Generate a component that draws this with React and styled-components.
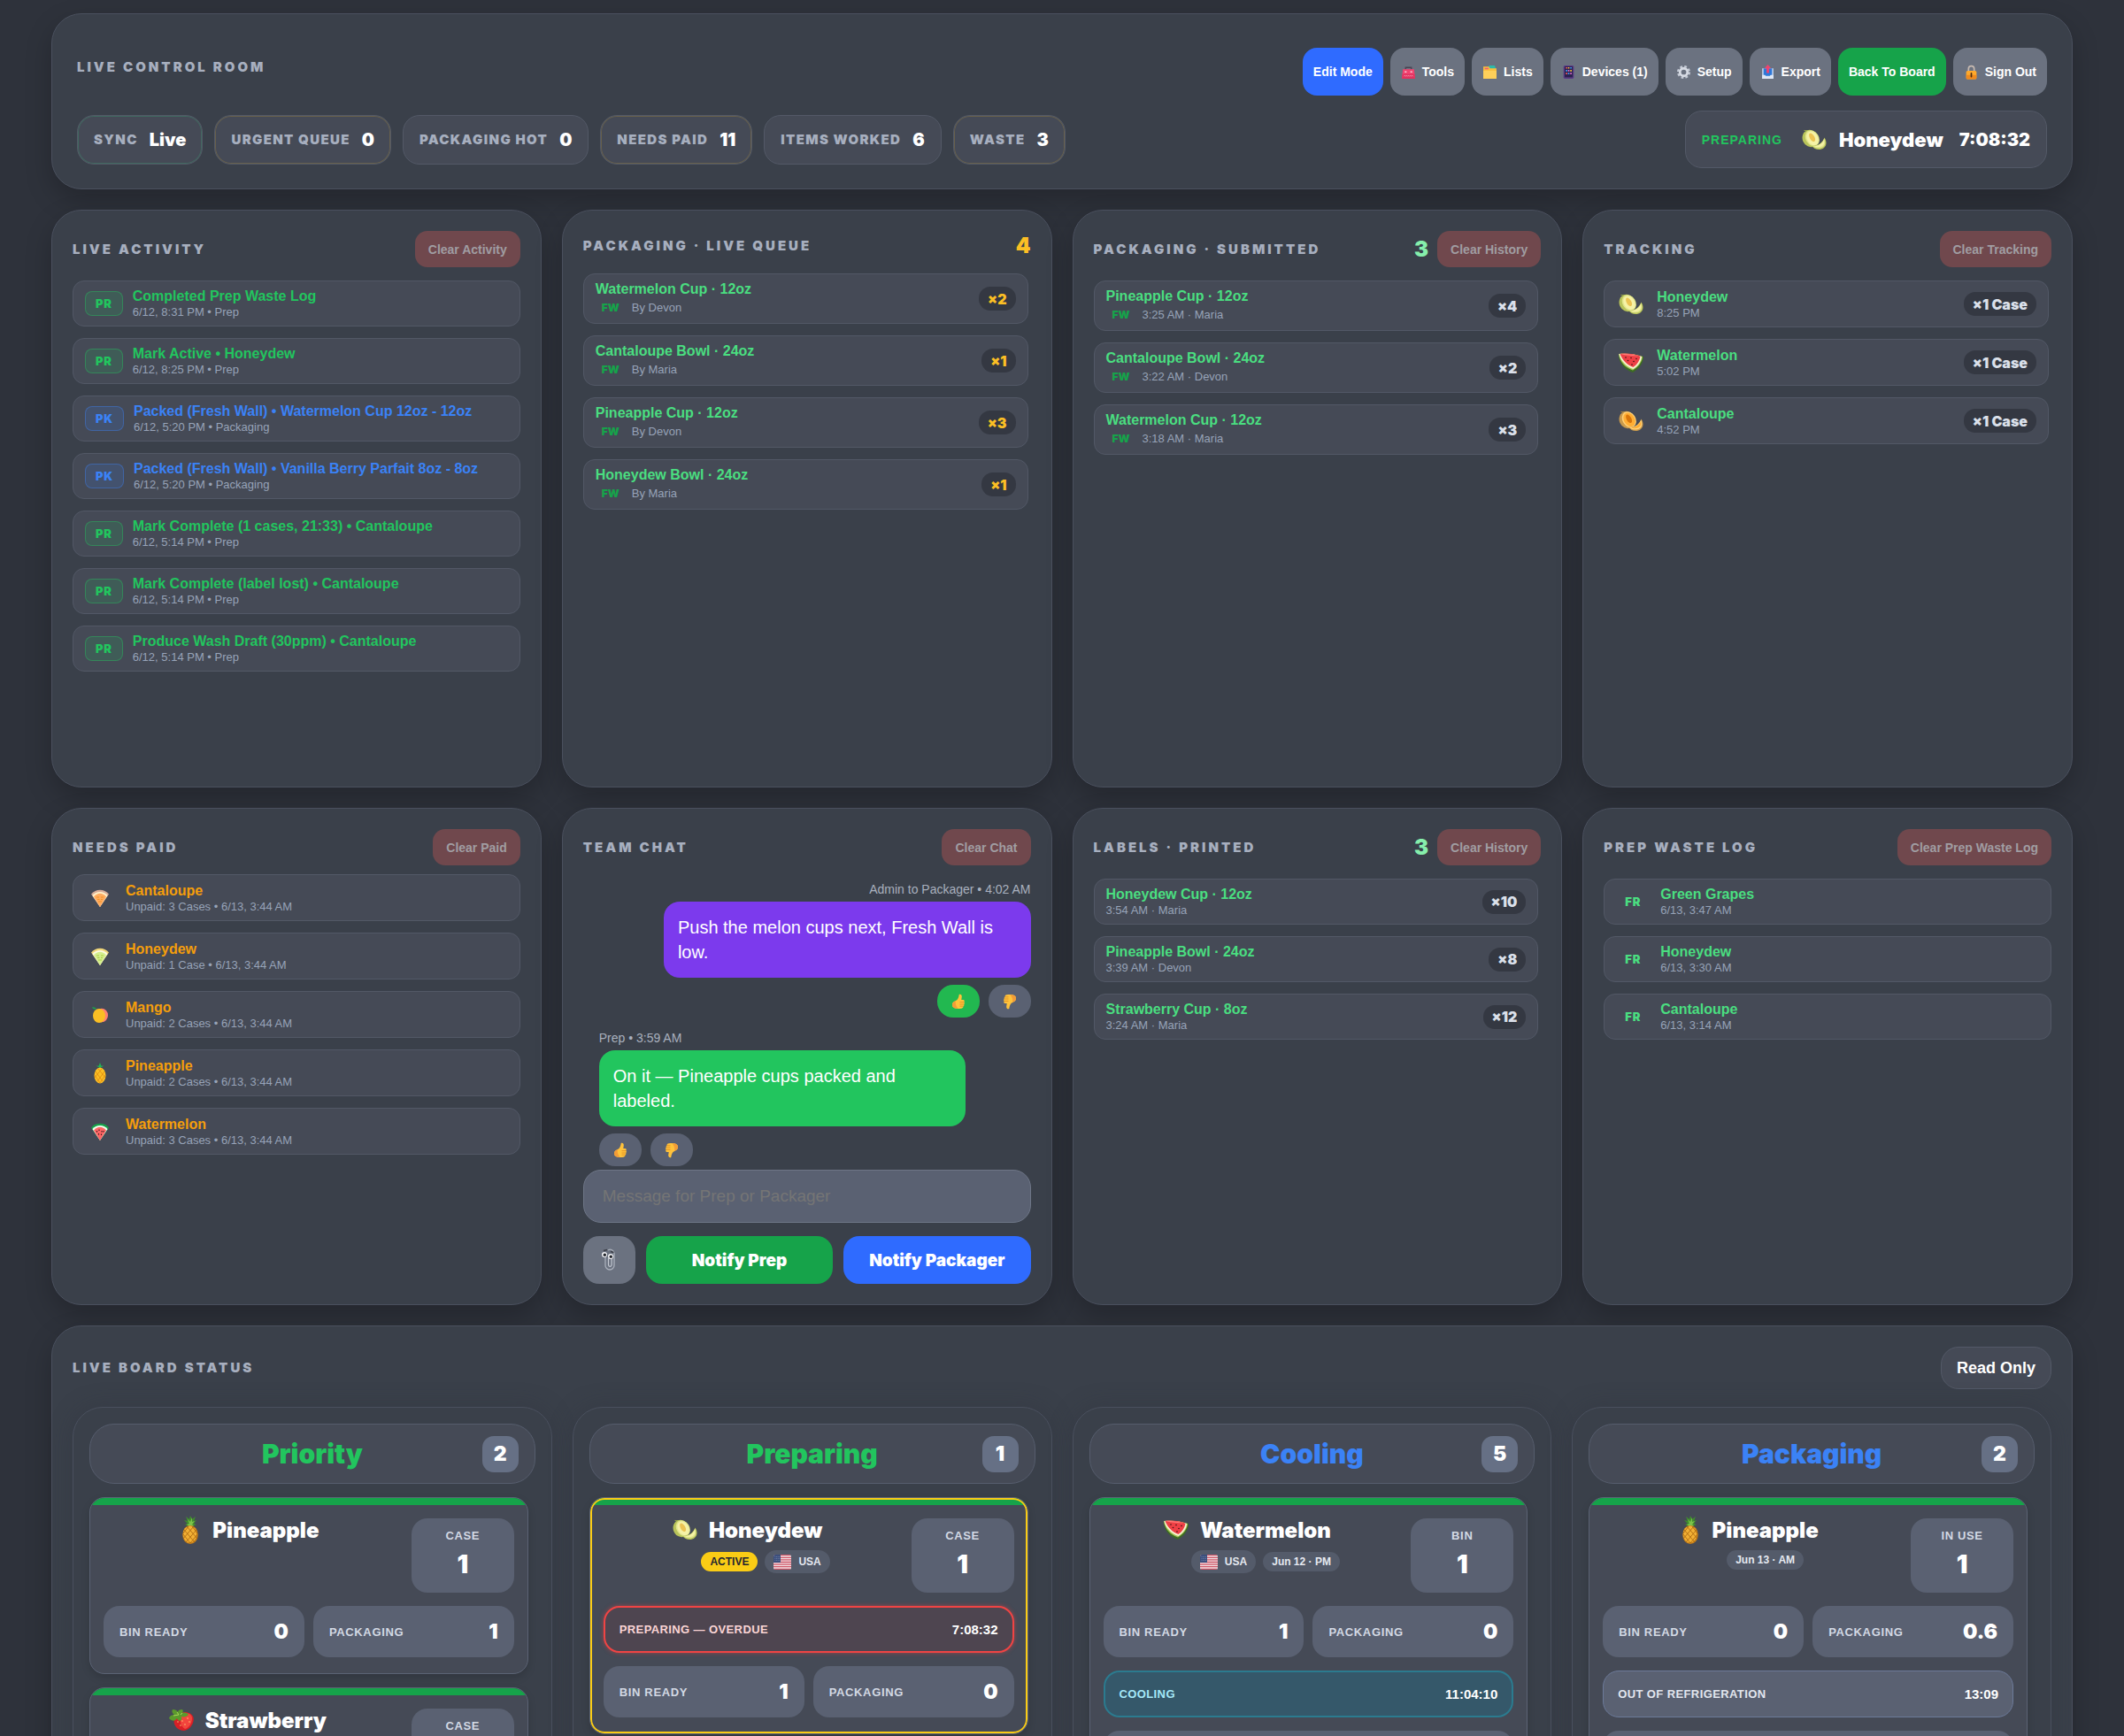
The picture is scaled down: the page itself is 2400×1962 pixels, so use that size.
import React from 'react'
import styled, { createGlobalStyle } from 'styled-components'

const black = `font-family: 'Arial Black', Inter, 'Liberation Sans', sans-serif; font-weight: 900;`

const GlobalStyle = createGlobalStyle`
*{
    box-sizing: border-box;
}
body{
    margin: 0;
    background: #2e323b;
    color: #fff;
    font-family: 'Liberation Sans', Arial, sans-serif;
}
h1, h2, h3, h4, p, ul{
    margin: 0;
    padding: 0;
}
ul{
    list-style: none;
}
button, input{
    font-family: inherit;
    border: 0;
    margin: 0;
}
svg{
    display: block;
    flex: none;
}
`

/* ---------- layout ---------- */

const Page = styled.main`
display: flex;
flex-direction: column;
gap: 23px;
height: 100vh;
overflow: hidden;
padding: 15px 58px 0;
`

const Panel = styled.section`
display: flex;
flex-direction: column;
flex: none;
min-width: 0;
padding: 23px;
border: 1px solid #4a505e;
border-radius: 34px;
background: #3a404a;
box-shadow: 0 12px 30px rgba(0, 0, 0, 0.22);
`

const PanelRow = styled.div`
display: grid;
flex: none;
grid-template-columns: repeat(4, minmax(0, 1fr));
grid-auto-rows: minmax(${p => p.$min}px, auto);
gap: 23px;
`

const PanelHead = styled.header`
display: flex;
align-items: center;
justify-content: space-between;
min-height: 33px;
margin-bottom: ${p => p.$space || 15}px;
`

const PanelTitle = styled.h2`
${black}
font-size: 15px;
line-height: 20px;
letter-spacing: 0.2em;
text-transform: uppercase;
color: #a7afbf;
`

const HeadSide = styled.div`
display: flex;
align-items: center;
gap: 10px;
`

const HeadCount = styled.span`
${black}
font-size: 24px;
line-height: 33px;
color: ${p => p.$color};
`

const ClearButton = styled.button`
height: 41px;
padding: 0 15px;
border-radius: 14px;
background: #70484d;
color: #a09da2;
font-size: 14px;
font-weight: 700;
`

/* ---------- top bar ---------- */

const TopBar = styled(Panel)`
gap: 17px;
padding: 38px 28px 23px;
`

const BarRow = styled.div`
display: flex;
align-items: ${p => p.$top ? 'flex-start' : 'center'};
justify-content: space-between;
`

const BarTitle = styled(PanelTitle)`
line-height: 44px;
`

const Toolbar = styled.nav`
display: flex;
gap: 8px;
`

const ToolButton = styled.button`
display: flex;
align-items: center;
gap: 7px;
height: 54px;
padding: 0 12px;
border-radius: 16px;
background: ${p => p.$bg || '#6b7280'};
color: #fff;
font-size: 14px;
font-weight: 700;
`

const Chips = styled.ul`
display: flex;
gap: 13px;
`

const Chip = styled.li`
display: flex;
align-items: center;
gap: 13px;
height: 56px;
padding: 0 18px;
border: 1px solid #535967;
border-radius: 19px;
background: #454a56;
box-shadow: inset 0 0 0 1px ${p => p.$ring || 'transparent'};
span{
    ${black}
    font-size: 15px;
    letter-spacing: 0.09em;
    color: #a7afbf;
}
strong{
    ${black}
    font-size: 20px;
}
`

const Running = styled.div`
display: flex;
align-items: center;
gap: 18px;
height: 65px;
padding: 0 18px;
border: 1px solid #535967;
border-radius: 19px;
background: #454a56;
.state{
    font-size: 14px;
    font-weight: 700;
    letter-spacing: 1px;
    color: #22c55e;
}
.name{
    ${black}
    display: flex;
    align-items: center;
    gap: 14px;
    padding-left: 4px;
    font-size: 22px;
}
.time{
    ${black}
    font-size: 20px;
}
`

/* ---------- list rows ---------- */

const List = styled.ul`
display: flex;
flex-direction: column;
gap: 13px;
padding-right: ${p => p.$inset ? 3 : 0}px;
`

const Row = styled.li`
display: flex;
align-items: center;
gap: ${p => p.$gap || 11}px;
min-height: ${p => p.$tall ? 53 : 52}px;
padding: 7px 13px;
border: 1px solid #525866;
border-radius: 13px;
background: #454a56;
`

const RowText = styled.div`
flex: 1;
min-width: 0;
h3{
    font-size: 16px;
    line-height: 20px;
    font-weight: 700;
    color: ${p => p.$color || '#4ade80'};
}
p{
    display: flex;
    align-items: center;
    gap: 7px;
    font-size: 13px;
    line-height: ${p => p.$tagged ? 21 : 16}px;
    color: #97a3b8;
}
`

const Code = styled.span`
${black}
display: grid;
place-items: center;
height: 28px;
padding: 0 11px;
border: 1px solid ${p => p.$color}66;
border-radius: 8px;
background: ${p => p.$color}26;
color: ${p => p.$color};
font-size: 13px;
letter-spacing: 0.06em;
`

const PlainCode = styled.span`
${black}
width: 38px;
text-align: center;
font-size: 13px;
letter-spacing: 0.06em;
color: #4ade80;
`

const Place = styled.span`
${black}
padding: 0 7px;
font-size: 12px;
color: #16a34a;
`

const Pill = styled.span`
${black}
display: grid;
place-items: center;
height: 27px;
padding: 0 10px;
border-radius: 13px;
background: #343842;
color: ${p => p.$color || '#dbe0ea'};
font-size: 16px;
`

const IconBox = styled.span`
display: grid;
place-items: center;
width: ${p => p.$w}px;
`

/* ---------- chat ---------- */

const Messages = styled.div`
display: flex;
flex: 1;
flex-direction: column;
gap: 15px;
padding-top: 4px;
`

const Message = styled.article`
display: flex;
flex-direction: column;
align-items: ${p => p.$mine ? 'flex-end' : 'flex-start'};
padding-left: 18px;
.meta{
    font-size: 14px;
    line-height: 16px;
    color: #a9b0be;
}
.bubble{
    width: 85%;
    margin: 6px 0 8px;
    padding: 15px 16px;
    border-radius: 18px;
    background: ${p => p.$bg};
    font-size: 20px;
    line-height: 28px;
}
`

const Reactions = styled.div`
display: flex;
gap: 10px;
`

const Reaction = styled.button`
display: grid;
place-items: center;
width: 48px;
height: 37px;
border-radius: 18px;
background: ${p => p.$on ? '#22b850' : '#5a6172'};
`

const MessageInput = styled.input`
width: 100%;
height: 60px;
margin-bottom: 15px;
padding: 0 21px;
border: 1px solid #6e7687;
border-radius: 20px;
background: #5a6172;
color: #fff;
font-size: 19px;
&::placeholder{
    color: #757575;
}
`

const SendRow = styled.div`
display: grid;
grid-template-columns: 59px 1fr 1fr;
gap: 12px;
`

const SendButton = styled.button`
${black}
display: grid;
place-items: center;
height: 54px;
border-radius: 18px;
background: ${p => p.$bg};
color: #fff;
font-size: 19px;
`

/* ---------- board ---------- */

const ReadOnly = styled.span`
display: grid;
place-items: center;
height: 48px;
padding: 0 17px;
border: 1px solid #535967;
border-radius: 20px;
background: #454a56;
font-size: 18px;
font-weight: 700;
`

const Column = styled.div`
display: flex;
flex-direction: column;
gap: 15px;
padding: 18px;
border: 1px solid #4a505e;
border-radius: 34px;
background: #3a404a;
box-shadow: 0 0 26px rgba(46, 48, 60, 0.35);
`

const ColumnHead = styled.header`
display: grid;
grid-template-columns: 1fr auto 1fr;
align-items: center;
height: 68px;
padding: 0 18px;
border: 1px solid #565d6d;
border-radius: 28px;
background: #454a56;
h3{
    ${black}
    grid-column: 2;
    font-size: 30px;
    color: ${p => p.$color};
}
span{
    ${black}
    justify-self: end;
    display: grid;
    place-items: center;
    width: 41px;
    height: 41px;
    border-radius: 13px;
    background: #667085;
    font-size: 23px;
}
`

const Cards = styled.div`
display: flex;
flex-direction: column;
gap: 15px;
padding-right: 8px;
`

const Card = styled.article`
position: relative;
display: flex;
flex-direction: column;
gap: 15px;
padding: 15px 15px 18px;
border: 1px solid #5b6374;
border-radius: 17px;
background: #454a56;
box-shadow: 0 4px 10px rgba(0, 0, 0, 0.15);
overflow: hidden;
&::before{
    content: '';
    height: 8px;
    margin: -15px -15px 0;
    background: #16a34a;
}
&::after{
    content: '';
    position: absolute;
    inset: 0;
    border: ${p => p.$active ? '2px solid #facc15' : '0'};
    border-radius: 16px;
    pointer-events: none;
}
`

const CardTop = styled.div`
display: grid;
grid-template-columns: minmax(0, 1fr) 116px;
gap: 22px;
`

const CardName = styled.div`
h4{
    ${black}
    display: flex;
    align-items: center;
    justify-content: center;
    gap: 13px;
    height: 26px;
    font-size: 24px;
}
div{
    display: flex;
    align-items: center;
    justify-content: center;
    gap: 8px;
    margin-top: 10px;
    padding-left: 41px;
}
`

const Tag = styled.span`
display: flex;
align-items: center;
gap: 8px;
height: ${p => p.$flag ? 26 : 22}px;
padding: 0 10px;
border-radius: 13px;
background: ${p => p.$active ? '#facc15' : '#545b6a'};
color: ${p => p.$active ? '#1f2430' : '#e5e9f0'};
font-size: 12px;
font-weight: 700;
`

const BigStat = styled.div`
display: flex;
flex-direction: column;
align-items: center;
height: 84px;
padding-top: 12px;
border-radius: 18px;
background: #5a6172;
span{
    font-size: 13px;
    line-height: 16px;
    font-weight: 700;
    letter-spacing: 0.05em;
    color: #d3d9e4;
}
strong{
    ${black}
    font-size: 28px;
    line-height: 48px;
}
`

const Stats = styled.div`
display: grid;
grid-template-columns: 1fr 1fr;
gap: 10px;
`

const Stat = styled.div`
display: flex;
align-items: center;
justify-content: space-between;
height: 58px;
padding: 0 18px;
border-radius: 18px;
background: #5a6172;
span{
    font-size: 13px;
    font-weight: 700;
    letter-spacing: 0.05em;
    color: #d3d9e4;
}
strong{
    ${black}
    font-size: 23px;
}
`

const timerTones = {
    overdue: { bg: '#4e4550', line: '#ef4444', text: '#fbd5d5', size: 2, glow: '0 0 5px rgba(239, 68, 68, 0.5)' },
    cooling: { bg: '#35586a', line: '#2b7b8f', text: '#a5e8f8', size: 2, glow: 'none' },
    warm: { bg: '#5a6172', line: '#6c7a99', text: '#e2e6ee', size: 1, glow: 'none' },
}

const Timer = styled.div`
display: flex;
align-items: center;
justify-content: space-between;
height: 53px;
padding: 0 16px;
border: ${p => timerTones[p.$tone].size}px solid ${p => timerTones[p.$tone].line};
border-radius: 18px;
background: ${p => timerTones[p.$tone].bg};
box-shadow: ${p => timerTones[p.$tone].glow};
span{
    font-size: 13px;
    font-weight: 700;
    letter-spacing: 0.03em;
    color: ${p => timerTones[p.$tone].text};
}
strong{
    font-size: 15px;
}
`

const CardFoot = styled.div`
height: 58px;
border-radius: 18px;
background: #5a6172;
`

/* ---------- icons ---------- */

const Melon = ({ rind, flesh, core, light, stem }) => (
    <svg width="28" height="24" viewBox="0 0 28 24" aria-hidden="true">
        <path d="M3 1.5c2 .8 4-.6 6 .5" stroke={stem} strokeWidth="1.3" fill="none" strokeLinecap="round" />
        <ellipse cx="9.5" cy="10.5" rx="8.8" ry="9.8" transform="rotate(-24 9.5 10.5)" fill={rind} />
        <ellipse cx="11.8" cy="10.2" rx="7.4" ry="9.6" transform="rotate(-32 11.8 10.2)" fill={light} />
        <ellipse cx="12" cy="10.2" rx="6" ry="8.3" transform="rotate(-32 12 10.2)" fill={flesh} />
        <ellipse cx="11.6" cy="9.3" rx="2.7" ry="5.2" transform="rotate(-30 11.6 9.3)" fill={core} />
        <path d="M25.5 9.5C28 13 28.5 18 25 21c-4 3.500-11 2.500-14-2.500C17 19.500 23 16.500 25.500 9.500z" fill={rind} />
        <path d="M25.2 10.5C27 14 26.8 18 24 20c-3.500 2.500-9 2-12-1C17.500 19.500 23 16.500 25.200 10.500z" fill={light} />
        <path d="M24.8 12.5c1 3 .2 5.200-2 6.500-2.500 1.500-6 1.500-8.500.2 4.500-.2 8.500-2.700 10.500-6.700z" fill={flesh} />
    </svg>
)

const Honeydew = () => <Melon rind="#b9c45a" flesh="#f6f2a6" core="#ecc453" light="#e1e68c" stem="#8a9a4a" />
const Cantaloupe = () => <Melon rind="#c99a4c" flesh="#ffae34" core="#d9760c" light="#ffd076" stem="#9a8046" />

const Watermelon = () => (
    <svg width="28" height="22" viewBox="0 0 28 22" aria-hidden="true">
        <path d="M0 1C9 0 19 1 28 4c0 7-4 13-12 18C7 19 0 12 0 1z" fill="#3d6b24" />
        <path d="M0 1c9-1 19 0 27 3-.5 6-4 11-11 15.500C8 17 1 10 0 1z" fill="#a7c957" />
        <path d="M.5 1c9-1 18 0 25.500 3-.5 5.500-3.500 10-9.500 14C9 15.500 2 9 .5 1z" fill="#f6f3d4" />
        <path d="M1.500 1c8-1 16 0 23 2.800-.7 5-3.500 9-8 12.200C10 13.800 4 8 1.500 1z" fill="#ee3f45" />
        <path d="M2 1.200c7-.7 14 0 20 2.300-6-.5-13-.7-20-2.300z" fill="#ff7c78" />
        <g fill="#3a1414">
            <circle cx="8" cy="5" r=".8" /><circle cx="14" cy="5.5" r=".8" /><circle cx="10.5" cy="8.5" r=".8" />
            <circle cx="17" cy="9.5" r=".8" /><circle cx="20" cy="6.5" r=".8" /><circle cx="15" cy="13" r=".8" />
        </g>
    </svg>
)

const Pineapple = () => (
    <svg width="32" height="32" viewBox="0 0 32 32" aria-hidden="true">
        <path d="M16 13l-6-3 3-1-4-4 4 1-2-5 4 3 1-4 2 4 4-3-2 5 3-1-3 4 3 1z" fill="#3f8f2c" />
        <path d="M16 13l-4-3 3-1-2-5 3 3 2-5v5l3-1-3 4 2 1z" fill="#7cc24a" />
        <ellipse cx="16" cy="21.5" rx="8.8" ry="10.5" fill="#c98018" />
        <ellipse cx="15.5" cy="21" rx="7.6" ry="9.4" fill="#f2b034" />
        <path d="M9 16l12 14M8 21l8 10M12 12l12 14M18 12l6 8M23 16L11 30M24 21l-8 10M20 12L8 26M14 12l-6 8" stroke="#a8640f" strokeWidth="0.8" />
    </svg>
)

const Strawberry = () => (
    <svg width="28" height="24" viewBox="0 0 28 24" aria-hidden="true">
        <path d="M12 5c4-4 14-2 15.500 4C29 16 23 23 17 24 9 24 4 17 6 10c1-2 3-4 6-5z" fill="#d81f26" />
        <path d="M15 6c5-3 11-1 11 4 0 6-4 11-8 12-5-3-7-10-3-16z" fill="#f2453d" />
        <path d="M0 10c1-3 3-4 6-4C3 4 3 2 4 0c3 0 5 1 6 3 0-2 2-3 5-3 1 1 1 3 0 4 3-1 6 0 7 2-2 2-5 3-8 2 1 3 0 4-2 5-2-1-3-2-3-3-2 3-5 4-9 0z" fill="#5b9a2c" />
        <path d="M5 7l6-1M9 3l2 3M15 4l-2 2" stroke="#a9d65b" strokeWidth="1" />
        <g fill="#ffd77a">
            <circle cx="10" cy="14" r=".7" /><circle cx="15" cy="13" r=".7" /><circle cx="21" cy="10" r=".7" />
            <circle cx="13" cy="18" r=".7" /><circle cx="18" cy="17" r=".7" /><circle cx="23" cy="14" r=".7" />
        </g>
    </svg>
)

const fruits = { Honeydew, Cantaloupe, Watermelon, Pineapple, Strawberry }

const Wedge = ({ rind, pith, flesh, marks, seeds }) => (
    <svg width="20" height="20" viewBox="0 0 20 20" aria-hidden="true">
        <path d="M0 5.5C5-1 15-1 20 5.5L10 20z" fill={rind} />
        <path d="M1.4 7C6 1.5 14 1.5 18.6 7L10 20z" fill={pith} />
        <path d="M3 8.5C7 3.5 13 3.5 17 8.5L10 20z" fill={flesh} />
        {marks && <path d="M6 9h3m2 0h3M7 11.5h2.500m1.500 0h2M8 14h4" stroke={marks} strokeWidth="0.9" />}
        {seeds && <path d="M6.5 9v1.500M9 7.500v1.500M12 9v1.500M14 9v1.500M8.500 12v1.500M11.500 12.500v1.500" stroke="#3b1d1d" strokeWidth="1.1" />}
    </svg>
)

const flatFruits = {
    Cantaloupe: <Wedge rind="#d9ad98" pith="#fff0c8" flesh="#ffab5e" marks="#f0921e" />,
    Honeydew: <Wedge rind="#f1d77a" pith="#fdfbe0" flesh="#d4ee8e" marks="#a7c93a" />,
    Watermelon: <Wedge rind="#16a34a" pith="#f3fdf0" flesh="#ff6464" seeds />,
    Mango: (
        <svg width="20" height="20" viewBox="0 0 20 20" aria-hidden="true">
            <ellipse cx="12" cy="10.5" rx="7" ry="7.8" fill="#ff7f73" />
            <ellipse cx="9" cy="11" rx="7" ry="8" fill="#fbbf24" />
            <path d="M1 1.5c2-.5 4 0 5 2-2 .5-4 0-5-2z" fill="#1f9d4d" />
        </svg>
    ),
    Pineapple: (
        <svg width="20" height="24" viewBox="0 0 20 24" aria-hidden="true">
            <path d="M10 6L5.5 3.5l3 .3L10 0l1.500 3.800 3-.3z" fill="#22b455" />
            <ellipse cx="10" cy="14.5" rx="6.5" ry="9" fill="#fbbf24" />
            <path d="M5 10l8 11M8 7l8 10M15 10L7 21M12 7L4 17M4 14l6 9M16 14l-6 9" stroke="#e08a10" strokeWidth="0.8" />
        </svg>
    ),
}

const Glyph = ({ children }) => (
    <svg width="17" height="17" viewBox="0 0 16 16" aria-hidden="true">{children}</svg>
)

const glyphs = {
    tools: <Glyph>
        <path d="M5 5V3h6v2" fill="none" stroke="#4b4453" strokeWidth="1.4" />
        <path d="M2 5h12l1 10H1z" fill="#f0436f" />
        <path d="M1.5 10h13L15 15H1z" fill="#e2325f" />
        <path d="M4 7h2v1.500H4zM10 7h2v1.500h-2z" fill="#f7c9d6" />
        <path d="M3 12.5l1-1 1 1 1-1 1 1 1-1 1 1 1-1 1 1 1-1 1 1" stroke="#f7a7bd" strokeWidth=".7" fill="none" />
    </Glyph>,
    lists: <Glyph>
        <path d="M7 1h6l1 2v3H7z" fill="#2fb9a8" />
        <path d="M1 2h6l1 2h7v11H1z" fill="#fbbf3c" />
        <path d="M2.5 3.5h4v1.500h-4z" fill="#f05a78" />
        <path d="M1 6.5h14V15H1z" fill="#ffd05a" />
    </Glyph>,
    devices: <Glyph>
        <rect x="2.5" y="1" width="11" height="14" rx="1.5" fill="#5a3a86" />
        <rect x="3.7" y="2" width="8.6" height="11.5" fill="#2b2150" />
        <path d="M5 3.5h1.500M5 9.5h1.500" stroke="#ff5d5d" strokeWidth="1.5" />
        <path d="M7.3 3.5h1.500M9.7 6.5h1.500" stroke="#ffc83d" strokeWidth="1.5" />
        <path d="M9.7 3.5h1.500M5 6.5h1.500M7.3 9.5h1.500" stroke="#3ea2ff" strokeWidth="1.5" />
        <path d="M7.3 6.5h1.500M9.7 9.5h1.500" stroke="#e86fd0" strokeWidth="1.5" />
    </Glyph>,
    setup: <Glyph>
        <circle cx="8" cy="8" r="6" fill="none" stroke="#c5cbd6" strokeWidth="2.2" strokeDasharray="2.6 2.11" />
        <circle cx="8" cy="8" r="4" fill="none" stroke="#d6dae3" strokeWidth="2.6" />
    </Glyph>,
    exportBox: <Glyph>
        <path d="M2 4h12v11H2z" fill="#c3d3ee" />
        <path d="M3.5 4h9v8h-9z" fill="#2f78d8" />
        <path d="M2 11h3l1 1.500h4L11 11h3v4H2z" fill="#dfe7f5" />
        <path d="M8 0l3.500 4H9.300v5H6.700V4H4.500z" fill="#f0436f" />
    </Glyph>,
    lock: <Glyph>
        <path d="M5 7V4.5a3 3 0 016 0V7" fill="none" stroke="#c6b9b0" strokeWidth="1.6" />
        <rect x="2.5" y="6.5" width="11" height="9" rx="1.5" fill="#ffa92b" />
        <path d="M2.5 11h11v3a1.500 1.500 0 01-1.500 1.500H4A1.500 1.500 0 012.500 14z" fill="#f08a1d" />
        <path d="M8 9.3v3.500" stroke="#4a2a10" strokeWidth="1.6" strokeLinecap="round" />
    </Glyph>,
}

const Thumb = ({ down }) => (
    <svg width="16" height="18" viewBox="0 0 16 18" aria-hidden="true">
        <g transform={down ? 'rotate(180 8 9)' : undefined}>
            <path d="M6.5 7C8 5 8.500 3 8.700 1c1.600-1 3.300.2 3.100 2.500L11.300 7h2.200c1.500.2 1.700 1.900.7 2.500 1 .6.900 2-.1 2.400.7.800.3 1.900-.6 2.200.2 1.200-.5 2.400-2 2.600-4 .6-7 .3-8.500-.7C1.200 15 .8 13.500 1 12c.3-2.800 3.500-3.500 5.500-5z" fill="#ffc23b" />
            <path d="M1 12c.2-2 2-3.200 4-4-.8 2.500 0 6 2.500 8.700-2 0-3.700-.2-4.500-.7C1.200 15 .8 13.500 1 12z" fill="#f29c38" />
            <path d="M9.5 9.6h4.500M9.5 12h4.400M9.5 14.2h4" stroke="#dd8a22" strokeWidth=".8" />
        </g>
    </svg>
)

const Clip = () => (
    <svg width="18" height="28" viewBox="0 0 18 28" aria-hidden="true">
        <path d="M5 9v11a5 5 0 0010 0V6.500a4.500 4.500 0 00-7-3.500" fill="none" stroke="#aab0bb" strokeWidth="1.3" />
        <path d="M8.5 12v7.500a1.800 1.800 0 003.600 0V11" fill="none" stroke="#c5cad3" strokeWidth="1.2" />
        <circle cx="4" cy="8" r="3" fill="#f4f5f7" />
        <circle cx="11" cy="10" r="3" fill="#f4f5f7" />
        <circle cx="4.3" cy="8.3" r="1.7" fill="#23262d" />
        <circle cx="11.3" cy="10.3" r="1.7" fill="#23262d" />
        <path d="M3 3.5l4-1M11 4.5l3.500 1" stroke="#3a3d45" strokeWidth="1.4" />
    </svg>
)

const Flag = () => (
    <svg width="20" height="17" viewBox="0 0 20 17" aria-hidden="true">
        <rect width="20" height="17" rx="2.5" fill="#f1dfe3" />
        <path d="M1 .7h18M0 3.3h20M0 5.9h20M0 8.5h20M0 11.1h20M0 13.7h20M1 16.3h18" stroke="#d0596a" strokeWidth="1.3" />
        <path d="M2.5 0H8v9H0V2.500A2.500 2.500 0 012.500 0z" fill="#3c4f7d" />
        <path d="M1.5 2.5h5.500M1.5 4.5h5.500M1.5 6.5h5.500" stroke="#8493b5" strokeWidth=".7" strokeDasharray=".8 .8" />
    </svg>
)

/* ---------- data ---------- */

const tools = [
    { name: 'Edit Mode', bg: '#2f6bff' },
    { name: 'Tools', icon: 'tools' },
    { name: 'Lists', icon: 'lists' },
    { name: 'Devices (1)', icon: 'devices' },
    { name: 'Setup', icon: 'setup' },
    { name: 'Export', icon: 'exportBox' },
    { name: 'Back To Board', bg: '#16a34a' },
    { name: 'Sign Out', icon: 'lock' },
]

const chips = [
    ['Sync', 'Live', '#40685f'],
    ['Urgent Queue', '0', '#67604c'],
    ['Packaging Hot', '0'],
    ['Needs Paid', '11', '#67604c'],
    ['Items Worked', '6'],
    ['Waste', '3', '#67604c'],
]

const activity = [
    ['PR', 'Completed Prep Waste Log', '6/12, 8:31 PM • Prep'],
    ['PR', 'Mark Active • Honeydew', '6/12, 8:25 PM • Prep'],
    ['PK', 'Packed (Fresh Wall) • Watermelon Cup 12oz - 12oz', '6/12, 5:20 PM • Packaging'],
    ['PK', 'Packed (Fresh Wall) • Vanilla Berry Parfait 8oz - 8oz', '6/12, 5:20 PM • Packaging'],
    ['PR', 'Mark Complete (1 cases, 21:33) • Cantaloupe', '6/12, 5:14 PM • Prep'],
    ['PR', 'Mark Complete (label lost) • Cantaloupe', '6/12, 5:14 PM • Prep'],
    ['PR', 'Produce Wash Draft (30ppm) • Cantaloupe', '6/12, 5:14 PM • Prep'],
]

const queue = [
    ['Watermelon Cup · 12oz', 'By Devon', 2],
    ['Cantaloupe Bowl · 24oz', 'By Maria', 1],
    ['Pineapple Cup · 12oz', 'By Devon', 3],
    ['Honeydew Bowl · 24oz', 'By Maria', 1],
]

const submitted = [
    ['Pineapple Cup · 12oz', '3:25 AM · Maria', 4],
    ['Cantaloupe Bowl · 24oz', '3:22 AM · Devon', 2],
    ['Watermelon Cup · 12oz', '3:18 AM · Maria', 3],
]

const tracking = [
    ['Honeydew', '8:25 PM'],
    ['Watermelon', '5:02 PM'],
    ['Cantaloupe', '4:52 PM'],
]

const unpaid = [
    ['Cantaloupe', '3 Cases'],
    ['Honeydew', '1 Case'],
    ['Mango', '2 Cases'],
    ['Pineapple', '2 Cases'],
    ['Watermelon', '3 Cases'],
]

const labels = [
    ['Honeydew Cup · 12oz', '3:54 AM · Maria', 10],
    ['Pineapple Bowl · 24oz', '3:39 AM · Devon', 8],
    ['Strawberry Cup · 8oz', '3:24 AM · Maria', 12],
]

const waste = [
    ['Green Grapes', '6/13, 3:47 AM'],
    ['Honeydew', '6/13, 3:30 AM'],
    ['Cantaloupe', '6/13, 3:14 AM'],
]

const board = [
    {
        name: 'Priority', count: 2, color: '#22c55e', cards: [
            { fruit: 'Pineapple', unit: 'CASE', amount: 1, ready: 0, packaging: 1 },
            { fruit: 'Strawberry', unit: 'CASE' },
        ],
    },
    {
        name: 'Preparing', count: 1, color: '#22c55e', cards: [
            {
                fruit: 'Honeydew', unit: 'CASE', amount: 1, ready: 1, packaging: 0, active: true, usa: true,
                timer: ['overdue', 'PREPARING — OVERDUE', '7:08:32'], timerFirst: true,
            },
        ],
    },
    {
        name: 'Cooling', count: 5, color: '#3b82f6', cards: [
            {
                fruit: 'Watermelon', unit: 'BIN', amount: 1, ready: 1, packaging: 0, usa: true, date: 'Jun 12 · PM',
                timer: ['cooling', 'COOLING', '11:04:10'], foot: true,
            },
        ],
    },
    {
        name: 'Packaging', count: 2, color: '#3b82f6', cards: [
            {
                fruit: 'Pineapple', unit: 'IN USE', amount: 1, ready: 0, packaging: 0.6, date: 'Jun 13 · AM',
                timer: ['warm', 'OUT OF REFRIGERATION', '13:09'], foot: true,
            },
        ],
    },
]

/* ---------- parts ---------- */

function Head({ title, count, color, clear, space }) {
    return (
        <PanelHead $space={space}>
            <PanelTitle>{title}</PanelTitle>
            <HeadSide>
                {count && <HeadCount $color={color}>{count}</HeadCount>}
                {clear && <ClearButton type="button" disabled>{clear}</ClearButton>}
            </HeadSide>
        </PanelHead>
    )
}

function PackRow({ item, color, tagged }) {
    const [name, sub, qty] = item
    return (
        <Row>
            <RowText $tagged={tagged}>
                <h3>{name}</h3>
                <p>{tagged && <Place>FW</Place>}<span>{sub}</span></p>
            </RowText>
            <Pill $color={color}>×{qty}</Pill>
        </Row>
    )
}

function ChatMessage({ mine, bg, meta, text, liked }) {
    return (
        <Message $mine={mine} $bg={bg}>
            <p className="meta">{meta}</p>
            <p className="bubble">{text}</p>
            <Reactions>
                <Reaction type="button" aria-label="Thumbs up" $on={liked}><Thumb /></Reaction>
                <Reaction type="button" aria-label="Thumbs down"><Thumb down /></Reaction>
            </Reactions>
        </Message>
    )
}

function FruitCard({ fruit, unit, amount, ready, packaging, active, usa, date, timer, timerFirst, foot }) {
    const Fruit = fruits[fruit]
    const bar = timer && (
        <Timer $tone={timer[0]}>
            <span>{timer[1]}</span>
            <strong>{timer[2]}</strong>
        </Timer>
    )
    return (
        <Card $active={active}>
            <CardTop>
                <CardName>
                    <h4><IconBox $w={28}><Fruit /></IconBox>{fruit}</h4>
                    <div>
                        {active && <Tag $active>ACTIVE</Tag>}
                        {usa && <Tag $flag><Flag />USA</Tag>}
                        {date && <Tag>{date}</Tag>}
                    </div>
                </CardName>
                <BigStat><span>{unit}</span><strong>{amount}</strong></BigStat>
            </CardTop>
            {timerFirst && bar}
            {ready !== undefined && (
                <Stats>
                    <Stat><span>BIN READY</span><strong>{ready}</strong></Stat>
                    <Stat><span>PACKAGING</span><strong>{packaging}</strong></Stat>
                </Stats>
            )}
            {!timerFirst && bar}
            {foot && <CardFoot />}
        </Card>
    )
}

export default function App() {
    return (
        <>
            <GlobalStyle />
            <Page>
                <TopBar as="header">
                    <BarRow $top>
                        <BarTitle as="h1">Live Control Room</BarTitle>
                        <Toolbar>
                            {tools.map(t => (
                                <ToolButton type="button" key={t.name} $bg={t.bg}>
                                    {glyphs[t.icon]}{t.name}
                                </ToolButton>
                            ))}
                        </Toolbar>
                    </BarRow>
                    <BarRow>
                        <Chips>
                            {chips.map(([name, value, ring]) => (
                                <Chip key={name} $ring={ring}>
                                    <span>{name.toUpperCase()}</span>
                                    <strong>{value}</strong>
                                </Chip>
                            ))}
                        </Chips>
                        <Running>
                            <span className="state">PREPARING</span>
                            <span className="name"><Honeydew />Honeydew</span>
                            <span className="time">7:08:32</span>
                        </Running>
                    </BarRow>
                </TopBar>

                <PanelRow $min={653}>
                    <Panel>
                        <Head title="Live Activity" clear="Clear Activity" />
                        <List>
                            {activity.map(([code, name, sub]) => {
                                const color = code === 'PR' ? '#22c55e' : '#3b82f6'
                                return (
                                    <Row key={name}>
                                        <Code $color={color}>{code}</Code>
                                        <RowText $color={color}>
                                            <h3>{name}</h3>
                                            <p>{sub}</p>
                                        </RowText>
                                    </Row>
                                )
                            })}
                        </List>
                    </Panel>
                    <Panel>
                        <Head title="Packaging · Live Queue" count={4} color="#fbbf24" />
                        <List $inset>
                            {queue.map(item => <PackRow key={item[0]} item={item} color="#fbbf24" tagged />)}
                        </List>
                    </Panel>
                    <Panel>
                        <Head title="Packaging · Submitted" count={3} color="#86efac" clear="Clear History" />
                        <List $inset>
                            {submitted.map(item => <PackRow key={item[0]} item={item} tagged />)}
                        </List>
                    </Panel>
                    <Panel>
                        <Head title="Tracking" clear="Clear Tracking" />
                        <List $inset>
                            {tracking.map(([name, time]) => {
                                const Fruit = fruits[name]
                                return (
                                    <Row key={name} $tall $gap={12}>
                                        <IconBox $w={34}><Fruit /></IconBox>
                                        <RowText>
                                            <h3>{name}</h3>
                                            <p>{time}</p>
                                        </RowText>
                                        <Pill>×1 Case</Pill>
                                    </Row>
                                )
                            })}
                        </List>
                    </Panel>
                </PanelRow>

                <PanelRow $min={562}>
                    <Panel>
                        <Head title="Needs Paid" clear="Clear Paid" space={10} />
                        <List>
                            {unpaid.map(([name, amount]) => (
                                <Row key={name} $tall $gap={12}>
                                    <IconBox $w={34}>{flatFruits[name]}</IconBox>
                                    <RowText $color="#f59e0b">
                                        <h3>{name}</h3>
                                        <p>Unpaid: {amount} • 6/13, 3:44 AM</p>
                                    </RowText>
                                </Row>
                            ))}
                        </List>
                    </Panel>
                    <Panel>
                        <Head title="Team Chat" clear="Clear Chat" />
                        <Messages>
                            <ChatMessage
                                mine
                                liked
                                bg="#7c3aed"
                                meta="Admin to Packager • 4:02 AM"
                                text="Push the melon cups next, Fresh Wall is low."
                            />
                            <ChatMessage
                                bg="#22c55e"
                                meta="Prep • 3:59 AM"
                                text="On it — Pineapple cups packed and labeled."
                            />
                        </Messages>
                        <MessageInput
                            type="text"
                            aria-label="Message for Prep or Packager"
                            placeholder="Message for Prep or Packager"
                        />
                        <SendRow>
                            <SendButton type="button" aria-label="Attach" $bg="#6b7280"><Clip /></SendButton>
                            <SendButton type="button" $bg="#16a34a">Notify Prep</SendButton>
                            <SendButton type="button" $bg="#2f6bff">Notify Packager</SendButton>
                        </SendRow>
                    </Panel>
                    <Panel>
                        <Head title="Labels · Printed" count={3} color="#86efac" clear="Clear History" />
                        <List $inset>
                            {labels.map(item => <PackRow key={item[0]} item={item} />)}
                        </List>
                    </Panel>
                    <Panel>
                        <Head title="Prep Waste Log" clear="Clear Prep Waste Log" />
                        <List>
                            {waste.map(([name, time]) => (
                                <Row key={name} $gap={12}>
                                    <PlainCode>FR</PlainCode>
                                    <RowText>
                                        <h3>{name}</h3>
                                        <p>{time}</p>
                                    </RowText>
                                </Row>
                            ))}
                        </List>
                    </Panel>
                </PanelRow>

                <Panel>
                    <PanelHead $space={20}>
                        <PanelTitle>Live Board Status</PanelTitle>
                        <ReadOnly>Read Only</ReadOnly>
                    </PanelHead>
                    <PanelRow $min={480}>
                        {board.map(col => (
                            <Column key={col.name}>
                                <ColumnHead $color={col.color}>
                                    <h3>{col.name}</h3>
                                    <span>{col.count}</span>
                                </ColumnHead>
                                <Cards>
                                    {col.cards.map(card => <FruitCard key={card.fruit} {...card} />)}
                                </Cards>
                            </Column>
                        ))}
                    </PanelRow>
                </Panel>
            </Page>
        </>
    )
}
